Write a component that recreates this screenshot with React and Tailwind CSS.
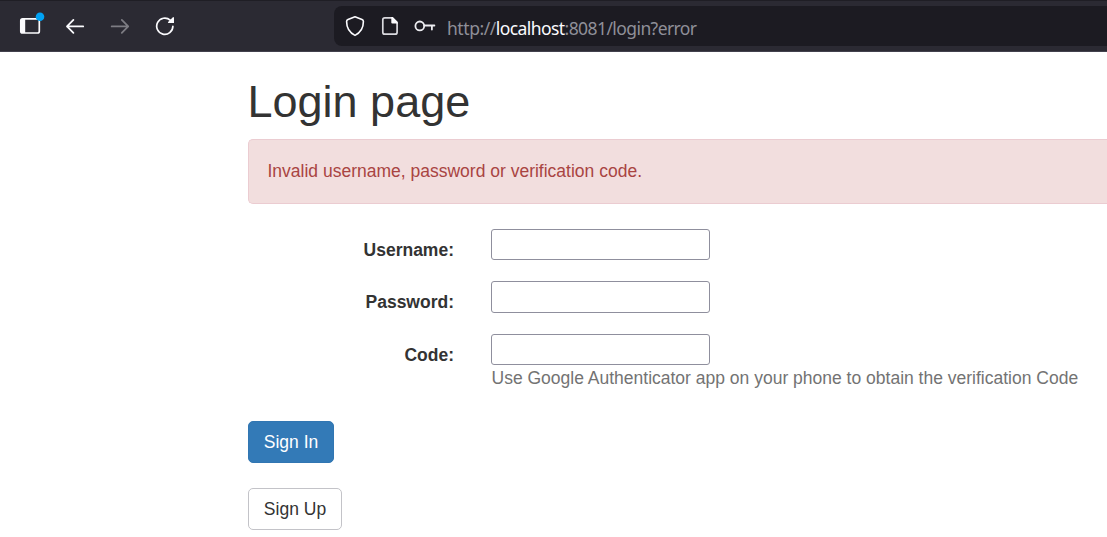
import React from 'react';

function SidebarIcon() {
  return (
    <svg className="block h-[30px] w-[26px] shrink-0" viewBox="19 11 26 30" fill="none">
      <rect x="20.8" y="18.8" width="18.5" height="14.2" rx="1.8" stroke="#fbfbfe" strokeWidth="1.7" />
      <path d="M21 19h4.200v14h-4.200z" fill="#fbfbfe" />
      <circle cx="40" cy="16.8" r="4.3" fill="#00a2f4" />
    </svg>
  );
}

function BackIcon() {
  return (
    <svg className="block h-[20px] w-[20px] shrink-0" viewBox="65 16 20 20" fill="none" stroke="#fbfbfe" strokeWidth="1.8" strokeLinecap="round" strokeLinejoin="round">
      <path d="M83.200 26.400H67M73.400 19.900 67 26.400l6.400 6.400" />
    </svg>
  );
}

function ForwardIcon() {
  return (
    <svg className="block h-[20px] w-[20px] shrink-0" viewBox="110 16 20 20" fill="none" stroke="#7d7c83" strokeWidth="1.8" strokeLinecap="round" strokeLinejoin="round">
      <path d="M111.700 26.400H128.200M121.800 19.900l6.400 6.500-6.400 6.400" />
    </svg>
  );
}

function ReloadIcon() {
  return (
    <svg className="block h-[20px] w-[20px] shrink-0" viewBox="155 16 20 20" fill="none">
      <path d="M172.900 26.300a8.100 8.100 0 1 1-2.700-6.100l1.600 1.600" stroke="#fbfbfe" strokeWidth="1.700" strokeLinecap="round" />
      <path d="M174 17.600v5.400h-5.600q-.9-.2-.3-.9l4.800-4.800q.8-.6 1.100.3z" fill="#fbfbfe" />
    </svg>
  );
}

function ShieldIcon() {
  return (
    <svg className="block h-[22px] w-[20px] shrink-0" viewBox="345 15 20 22" fill="none" stroke="#fbfbfe" strokeWidth="1.600" strokeLinejoin="round">
      <path d="M355 16.800l7 2.800q1.400.6 1.400 2c0 6.100-3 11.200-8.400 13.800-5.400-2.600-8.400-7.700-8.400-13.800q0-1.400 1.400-2z" />
    </svg>
  );
}

function PageIcon() {
  return (
    <svg className="block h-[20px] w-[18px] shrink-0" viewBox="381 16 18 20" fill="none">
      <path d="M392.200 17.800h-7.400a2 2 0 0 0-2 2v12.400a2 2 0 0 0 2 2h10.300a2 2 0 0 0 2-2v-9.200" stroke="#d9d9de" strokeWidth="1.700" />
      <path d="M391.300 17.100h1.600l5 5v1.500h-5.600a1 1 0 0 1-1-1z" fill="#fbfbfe" />
    </svg>
  );
}

function KeyIcon() {
  return (
    <svg className="block h-[14px] w-[22px] shrink-0" viewBox="414 19 22 14" fill="none" stroke="#ececf0" strokeWidth="1.800">
      <circle cx="419.800" cy="25.900" r="4.400" />
      <path d="M424.300 25.500H434.400M431.900 25.500v4" strokeLinecap="round" />
    </svg>
  );
}

function BrowserToolbar() {
  return (
    <header className="flex h-[52px] border-t border-b border-t-[#1f1e25] border-b-[#42414d] bg-[#2b2a33]">
      <nav className="flex w-[334px] items-center pl-[19px]" aria-label="Navigation">
        <SidebarIcon />
        <span className="ml-[20px]"><BackIcon /></span>
        <span className="ml-[25px]"><ForwardIcon /></span>
        <span className="ml-[25px]"><ReloadIcon /></span>
      </nav>
      <div className="mt-[5px] flex h-10 flex-1 items-center rounded-l-lg bg-[#1c1b22] pl-[11px]">
        <ShieldIcon />
        <span className="ml-4"><PageIcon /></span>
        <span className="ml-[15px]"><KeyIcon /></span>
        <span className="ml-[11px] pt-[3px] font-['Noto_Sans',sans-serif] text-[17.500px] leading-6 tracking-[-0.580px] whitespace-nowrap text-[#8f8f98]">
          <span className="tracking-[-0.440px]">http://</span><span className="text-[#fbfbfe]">localhost</span>:8081/login?error
        </span>
      </div>
    </header>
  );
}

function Field({ id, label, type = 'text', hint }) {
  return (
    <div className="flex h-[31.500px] items-start">
      <label htmlFor={id} className="w-[206px] pt-[9px] text-right leading-[25px] font-bold">{label}</label>
      <div className="ml-[37px]">
        <input id={id} type={type} className="block h-[31.500px] w-[219px] rounded-[3px] border border-[#8f8f9d] bg-white px-1" />
        {hint && <p className="pt-px pl-[0.500px] leading-[25px] whitespace-nowrap text-[#737373]">{hint}</p>}
      </div>
    </div>
  );
}

export default function App() {
  return (
    <div className="h-[537px] w-[1107px] overflow-hidden bg-white font-['Liberation_Sans',Arial,sans-serif] text-[17.500px] text-[#333333]">
      <BrowserToolbar />
      <main className="pt-[25px] pl-[248px]">
        <h1 className="-ml-[0.500px] h-[62px] text-[45px] leading-[50px]">Login page</h1>
        <div role="alert" className="h-[65px] rounded-l-[5px] border border-r-0 border-[#ebccd1] bg-[#f2dede] pt-[19px] pl-[18.500px] leading-[25px] text-[#a94442]">
          Invalid username, password or verification code.
        </div>
        <form className="mt-[24.600px]" onSubmit={(event) => event.preventDefault()}>
          <div className="flex h-[136.400px] flex-col gap-[21px]">
            <Field id="username" label="Username:" />
            <Field id="password" label="Password:" type="password" />
            <Field id="code" label="Code:" hint="Use Google Authenticator app on your phone to obtain the verification Code" />
          </div>
          <div className="mt-[56px] flex flex-col items-start gap-[25px]">
            <button type="submit" className="h-[42px] w-[86px] rounded-[5px] border border-[#3176b2] bg-[#337ab7] pt-px text-white">Sign In</button>
            <button type="button" className="h-[42px] w-[94px] rounded-[5px] border border-[#c3c3c8] bg-white pt-px">Sign Up</button>
          </div>
        </form>
      </main>
    </div>
  );
}
